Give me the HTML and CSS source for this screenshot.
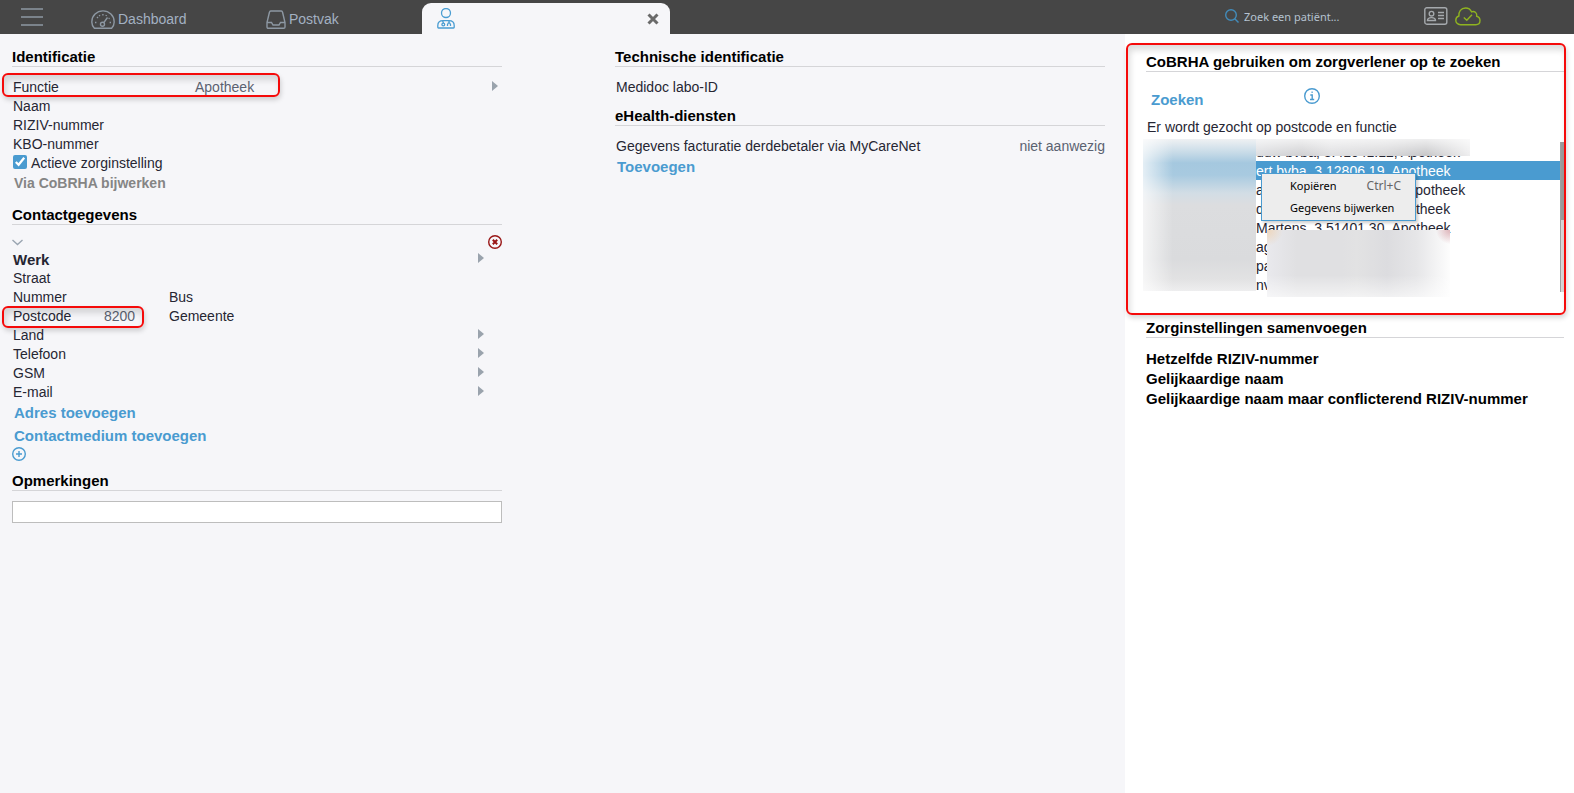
FILE: index.html
```html
<!DOCTYPE html>
<html lang="nl">
<head>
<meta charset="utf-8">
<title>Zorginstelling</title>
<link rel="stylesheet" href="styles.css">
</head>
<body>
<header class="topbar">
  <button class="menu-button" type="button" aria-label="Menu">
    <svg width="22" height="18" viewBox="0 0 22 18"><path d="M0 1H22M0 9H22M0 17H22"/></svg>
  </button>
  <nav class="tabs">
    <a class="tab" href="#">
      <svg width="24" height="20" viewBox="0 0 24 20"><path d="M3.4 18.3C1.8 16.500.8 14.300.8 11.900A11.200 11 0 0 1 23.200 11.900C23.200 14.300 22.200 16.500 20.600 18.300Z"/><circle cx="11.500" cy="14.300" r="2"/><path d="M12.800 12.700L16.500 7.500"/><path d="M4 12.500h1.400M18.600 12.500H20M6 7l1 1M11.900 4v1.400M8.300 5l.5 1.100M15.400 5.100l-.4 1M18.500 8l-.8.8" /></svg>
      <span>Dashboard</span>
    </a>
    <a class="tab" href="#">
      <svg width="20" height="20" viewBox="0 0 20 20"><path d="M1 12.500L3.500 2Q3.700 1 4.700 1H15.300Q16.300 1 16.500 2L19 12.500V17Q19 18.300 17.700 18.300H2.300Q1 18.300 1 17ZM1 12.500H5.500L7 15H13L14.500 12.500H19"/></svg>
      <span>Postvak</span>
    </a>
  </nav>
  <div class="tab-active">
    <svg class="person" width="18" height="21" viewBox="0 0 18 21"><circle cx="9" cy="5" r="4.500"/><path d="M.8 19.300V17.500C.8 14.500 3 12.600 6 12.600H12C15 12.600 17.200 14.500 17.200 17.500V19.300Q17.200 20 16.500 20H1.500Q.8 20 .8 19.300ZM5.500 12.800L6.500 15M12 12.800V14.500M10.500 18V16.500Q12 13 13.500 16.500V18"/><circle cx="6.300" cy="16.500" r="1.400"/></svg>
    <button class="close-tab" type="button" aria-label="Tabblad sluiten"><svg width="12" height="12" viewBox="0 0 12 12"><path d="M1.500 1.500L10.500 10.500M10.500 1.500L1.500 10.500"/></svg></button>
  </div>
  <div class="tools">
    <label class="search">
      <svg width="14" height="14" viewBox="0 0 14 14"><circle cx="6" cy="6" r="5.300"/><path d="M9.800 9.800L13.500 13.500"/></svg>
      <input type="text" placeholder="Zoek een patiënt..." aria-label="Zoek een patiënt">
    </label>
    <svg class="card" width="24" height="18" viewBox="0 0 24 18"><rect x=".8" y=".8" width="22" height="16.400" rx="2"/><circle cx="7.500" cy="6.700" r="2.300"/><path d="M3.500 13.500C3.500 9.700 11.500 9.700 11.500 13.500ZM14 5.500H20M14 8.500H20M14 11.500H20"/></svg>
    <svg class="cloud" width="26" height="19" viewBox="0 0 26 19"><path d="M5.500 17.700C2.500 17.700.8 15.600.8 13.200C.8 11 2.200 9.500 3.900 9C3.500 4.700 6 1 10.500 1C13.500 1 15.500 2.400 16.500 4.800C19.300 3.700 22.300 5.500 21.700 9.200C24 9.800 25 11.600 25 13.500C25 15.900 23.300 17.700 20.800 17.700Z"/><path d="M8.800 10.500L11.800 13.300L17 7.800"/></svg>
  </div>
</header>

<div class="page">
  <main class="form">
    <div class="column">
      <section>
        <h2>Identificatie</h2>
        <div class="row row-function"><span>Functie</span><span class="value">Apotheek</span><i class="arrow"></i><div class="mark mark-function"></div></div>
        <div class="row">Naam</div>
        <div class="row">RIZIV-nummer</div>
        <div class="row">KBO-nummer</div>
        <label class="row check"><input type="checkbox" checked><span>Actieve zorginstelling</span></label>
        <button class="action update" type="button" disabled>Via CoBRHA bijwerken</button>
      </section>
      <section>
        <h2>Contactgegevens</h2>
        <div class="collapse">
          <svg class="chevron" width="11" height="7" viewBox="0 0 11 7"><path d="M.5 1L5.500 5.500L10.500 1"/></svg>
          <button class="remove" type="button" aria-label="Verwijderen"><svg width="14" height="14" viewBox="0 0 14 14"><circle cx="7" cy="7" r="6.300"/><path class="cross" d="M4.800 4.800L9.200 9.200M9.200 4.800L4.800 9.200"/></svg></button>
        </div>
        <div class="row row-contact"><b>Werk</b><i class="arrow"></i></div>
        <div class="row">Straat</div>
        <div class="row row-pair"><span>Nummer</span><span></span><span>Bus</span></div>
        <div class="row row-pair"><span>Postcode</span><span class="value">8200</span><span>Gemeente</span><div class="mark mark-postcode"></div></div>
        <div class="row row-contact"><span>Land</span><i class="arrow"></i></div>
        <div class="row row-contact"><span>Telefoon</span><i class="arrow"></i></div>
        <div class="row row-contact"><span>GSM</span><i class="arrow"></i></div>
        <div class="row row-contact"><span>E-mail</span><i class="arrow"></i></div>
        <button class="action" type="button">Adres toevoegen</button>
        <button class="action" type="button">Contactmedium toevoegen</button>
        <button class="add" type="button" aria-label="Toevoegen"><svg width="14" height="14" viewBox="0 0 14 14"><circle cx="7" cy="7" r="6.300"/><path d="M7 4V10M4 7H10"/></svg></button>
      </section>
      <section>
        <h2 id="remarks">Opmerkingen</h2>
        <input class="remarks" type="text" aria-labelledby="remarks">
      </section>
    </div>
    <div class="column">
      <section>
        <h2>Technische identificatie</h2>
        <div class="row">Medidoc labo-ID</div>
      </section>
      <section>
        <h2>eHealth-diensten</h2>
        <div class="row row-split"><span>Gegevens facturatie derdebetaler via MyCareNet</span><span class="value">niet aanwezig</span></div>
        <button class="action" type="button">Toevoegen</button>
      </section>
    </div>
  </main>

  <aside class="sidebar">
    <section class="cobrha">
      <h2>CoBRHA gebruiken om zorgverlener op te zoeken</h2>
      <div class="search-row">
        <button class="action" type="button">Zoeken</button>
        <svg class="info" width="16" height="16" viewBox="0 0 16 16"><circle cx="8" cy="8" r="7.300"/><path d="M6.300 7H8.200V11.500M6 11.500H10.200M7.500 4.300H8.700"/></svg>
      </div>
      <div class="row">Er wordt gezocht op postcode en functie</div>
      <div class="results">
        <ul class="list">
          <li>uuw bvba, 3.41041.12, Apotheek</li>
          <li class="selected">ert bvba, 3.12806.19, Apotheek</li>
          <li><span class="name-long">ac</span>Apotheek</li>
          <li><span class="name-short">dt</span>Apotheek</li>
          <li>Martens, 3.51401.30, Apotheek</li>
          <li>ag</li>
          <li>pa</li>
          <li>nv</li>
        </ul>
        <div class="scrollbar"></div>
        <div class="blur blur-names"></div>
        <div class="blur blur-top"></div>
        <div class="blur blur-bottom"></div>
        <div class="context-menu" role="menu">
          <button type="button" role="menuitem"><span>Kopiëren</span><span class="shortcut">Ctrl+C</span></button>
          <button type="button" role="menuitem">Gegevens bijwerken</button>
        </div>
      </div>
      <div class="mark mark-cobrha"></div>
    </section>
    <section class="merge">
      <h2>Zorginstellingen samenvoegen</h2>
      <ul class="merge-list">
        <li>Hetzelfde RIZIV-nummer</li>
        <li>Gelijkaardige naam</li>
        <li>Gelijkaardige naam maar conflicterend RIZIV-nummer</li>
      </ul>
    </section>
  </aside>
</div>
</body>
</html>
```

FILE: styles.css
```css
* { box-sizing: border-box; }
body {
  margin: 0;
  min-height: 100vh;
  display: flex;
  flex-direction: column;
  font: 14px/21px "Liberation Sans", Arial, sans-serif;
  color: #262633;
  background: #fff;
}
button { margin: 0; padding: 0; border: 0; background: none; font: inherit; color: inherit; text-align: left; }
svg { display: block; flex: none; fill: none; stroke: currentColor; stroke-width: 1.4; }
ul { margin: 0; padding: 0; list-style: none; }

.topbar { display: flex; height: 34px; background: #464646; color: #8d98a3; }
.menu-button { width: 91px; padding: 8px 0 0 21px; display: flex; }
.tabs { display: flex; width: 331px; }
.tab { display: flex; flex: none; align-items: center; gap: 3px; height: 34px; padding-top: 5px; color: #a3b1c2; text-decoration: none; }
.tab:first-child { width: 175px; }
.tab svg { color: #8d98a3; }
.tab-active {
  display: flex;
  align-items: center;
  justify-content: space-between;
  width: 248px;
  margin-top: 3px;
  padding: 0 11px 0 15px;
  border-radius: 9px 9px 0 0;
  background: #f6f6f9;
}
.person { color: #4a9dd2; stroke-width: 1.3; }
.close-tab { color: #6a6a6a; }
.close-tab svg { stroke-width: 3; }
.tools { display: flex; align-items: flex-start; margin-left: auto; width: 349px; padding-top: 7px; }
.search { display: flex; align-items: center; gap: 5px; width: 199px; height: 19px; color: #428cbb; }
.search svg { margin-bottom: 2px; }
.search input { width: 140px; padding: 0; border: 0; background: none; outline: 0; font: 11px/19px "Noto Sans", sans-serif; color: #b5c2d0; }
.search input::placeholder { color: #b5c2d0; opacity: 1; }
.card { color: #a5a9ad; margin-right: 7px; }
.cloud { color: #8fb320; }

.page { flex: 1; display: grid; grid-template-columns: minmax(0, 1fr) 449px; }
.form { display: grid; grid-template-columns: 1fr 1fr; column-gap: 113px; align-items: start; padding: 14px 20px 14px 12px; background: #f6f6f9; }
section + section { margin-top: 11px; }
h2 { margin: 0 0 10px; border-bottom: 1px solid #d5d5d8; font-size: 15px; line-height: 18px; color: #000; }
.row { position: relative; height: 19px; padding-left: 1px; }
.value { color: #5b6271; }
.row-function { display: grid; grid-template-columns: 182px 1fr auto; padding-right: 4px; }
.row-contact { display: flex; justify-content: space-between; padding-right: 18px; }
.row-contact b { font-size: 15px; }
.row-pair { display: grid; grid-template-columns: 91px 65px 1fr; }
.row-split { display: flex; justify-content: space-between; }
.arrow { height: 10px; margin-top: 4px; border: solid transparent; border-width: 5px 0 5px 6px; border-left-color: #9aa3ad; }
.check { display: flex; gap: 4px; }
.check input { width: 14px; height: 14px; margin: 2px 0 0; accent-color: #4a9bd0; }
.action { display: block; padding-left: 2px; font-size: 15px; font-weight: bold; line-height: 23px; color: #4a9bd0; }
.action:disabled { color: #858585; }
.update { font-size: 14px; }
.collapse { display: flex; align-items: center; justify-content: space-between; height: 14px; }
.chevron { color: #9aa5b1; }
.remove { color: #991616; }
.cross { stroke-width: 2; }
.add { display: block; color: #4a9bd0; }
.remarks { display: block; width: 100%; height: 22px; border: 1px solid #bdbdbd; background: #fff; font: inherit; }

.sidebar { padding: 19px 10px 14px 21px; background: #fff; }
.cobrha { position: relative; }
.search-row { display: flex; align-items: flex-start; justify-content: space-between; width: 174px; padding: 6px 0 6px 3px; }
.info { color: #4a9bd0; }
.results { position: relative; display: flex; height: 150px; margin-top: 6px; }
.list { flex: 1; overflow: hidden; white-space: nowrap; }
.list li { display: flex; height: 19px; padding-left: 110px; }
.list .selected { background: #4a9bd0; color: #fff; }
.name-long { width: 150px; }
.name-short { width: 135px; }
.scrollbar { width: 4px; border-left: 1px solid #a0a0a0; background: linear-gradient(#9c9c9c 78px, #d9d9d9 78px); }

.blur { position: absolute; }
.blur-names {
  left: -3px; top: -3px; width: 113px; height: 152px;
  background:
    linear-gradient(90deg, rgba(255,255,255,.7), rgba(255,255,255,0) 30px),
    linear-gradient(#eff1f3, #c6dae7 14px, #a5c8df 24px, #a8cae0 36px, #d2dde5 54px, #dcdddf 66px, #dadbdd 120px, #e2e2e3 140px, #eeeeef);
}
.blur-top {
  left: 110px; top: -3px; width: 214px; height: 17px;
  background:
    linear-gradient(rgba(255,255,255,.7), rgba(255,255,255,0)),
    linear-gradient(90deg, #dcdde0, #cfcfd1 45px, #dedee0 75px, #d6d6d8 130px, #c6c6c8 170px, #eeeeef);
}
.blur-bottom {
  left: 121px; top: 88px; width: 183px; height: 67px;
  background:
    radial-gradient(circle at 100% 0, rgba(200,130,140,.6), rgba(200,130,140,0) 14px),
    radial-gradient(circle at 0 0, rgba(240,205,165,.7), rgba(240,205,165,0) 16px),
    linear-gradient(rgba(255,255,255,0) 45px, rgba(255,255,255,.6)),
    linear-gradient(90deg, #e9e9ed, #e0e0e2 30px, #e0e0e2 75px, #e2e2e3 90px, #dcdcdf 120px, #e6e6e8 150px, #fdfdfd);
}

.context-menu {
  position: absolute;
  left: 115px; top: 31px;
  width: 155px;
  padding: 1px 0;
  border: 1px solid #4a9bd0;
  background: #ededed;
  box-shadow: 2px 2px 3px rgba(0,0,0,.2);
  color: #000;
  font: 11px/22px "Noto Sans", sans-serif;
}
.context-menu button { display: flex; justify-content: space-between; width: 100%; padding: 0 14px 0 28px; white-space: nowrap; }
.context-menu .shortcut { color: #666; font-size: 12px; }

.mark {
  position: absolute;
  border: 2px solid #f50a0a;
  border-radius: 6px;
  box-shadow: 1px 3px 5px rgba(0,0,0,.16), inset 2px 5px 6px rgba(0,0,0,.14);
  pointer-events: none;
}
.mark-function { left: -10px; top: -4px; width: 278px; height: 24px; }
.mark-postcode { left: -10px; top: 0; width: 142px; height: 22px; }
.mark-cobrha { left: -20px; right: -2px; top: -10px; bottom: -23px; }

section.merge { margin-top: 27px; }
.merge-list { padding-top: 1px; font-size: 15px; font-weight: bold; line-height: 20px; color: #000; }
```
